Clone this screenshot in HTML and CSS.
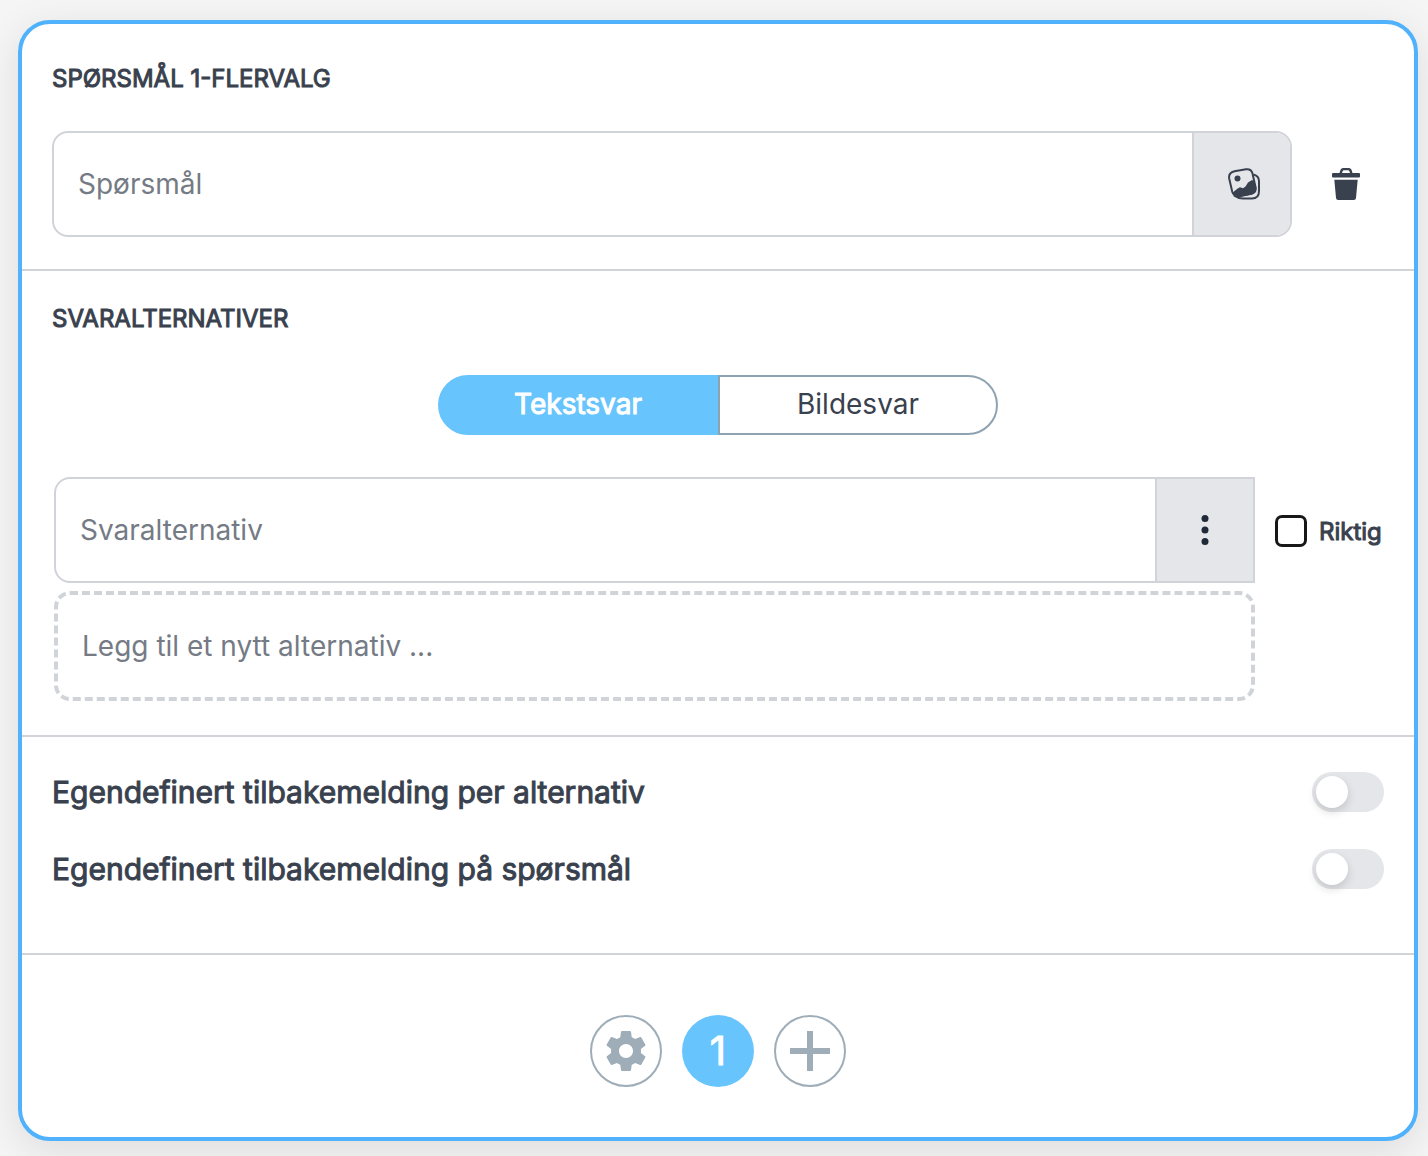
FILE: index.html
```html
<!DOCTYPE html>
<html lang="nb">
<head>
  <meta charset="UTF-8" />
  <meta name="viewport" content="width=device-width, initial-scale=1.0"/>
  <title>Flervalg</title>
  <link rel="stylesheet" href="styles.css">
</head>
<body>
  <form class="card">
    <section class="section question">
      <h2><label for="question">SPØRSMÅL 1-FLERVALG</label></h2>
      <div class="question-row">
        <div class="field">
          <input type="text" id="question" placeholder="Spørsmål">
          <button type="button" class="addon" aria-label="Legg til bilde">
            <svg width="36" height="32" viewBox="-4 0 36 32" fill="none" stroke="currentColor" stroke-width="2">
              <path d="M25.500 6.500C29 7.500 31 9.500 31 13V23Q31 30.500 24 30.500H15Q10 30.500 6 27.500"/>
              <path d="M6.500 3.300L18 1.200Q23.500 .6 24.500 5.500L27.500 19Q28.500 24.500 23.500 25.800L12 28Q6 29 4.300 24L1.200 10.500Q.2 5 6.500 3.300Z"/>
              <circle cx="9.500" cy="10.500" r="3" fill="currentColor" stroke="none"/>
              <path d="M4 25L10 20.200L12 19.200L15 20.200L17.500 18.500L20 14.500L24 12L26.500 13.500L28.300 19Q29 25 24 26.500L12 29Q6.500 29 4 25Z" fill="currentColor" stroke="none"/>
            </svg>
          </button>
        </div>
        <button type="button" class="trash" aria-label="Slett spørsmål">
          <svg width="28" height="32" viewBox="0 0 28 32" fill="currentColor">
            <path fill-rule="evenodd" d="M7.500 5L8.500 1.800Q9.200 0 11.200 0H16.800Q18.800 0 19.500 1.800L20.500 5H27Q28 5 28 6V8.500Q28 9.500 27 9.500H1Q0 9.500 0 8.500V6Q0 5 1 5ZM10 5H18L17.300 3Q17 2.300 16.300 2.300H11.700Q11 2.300 10.700 3Z"/>
            <path d="M2.300 11.800H25.700L24 30Q23.800 32 21.800 32H6.200Q4.200 32 4 30Z"/>
          </svg>
        </button>
      </div>
    </section>

    <section class="section answers">
      <h2>SVARALTERNATIVER</h2>
      <div class="segments">
        <button type="button" class="active">Tekstsvar</button>
        <button type="button">Bildesvar</button>
      </div>
      <div class="answer-list">
        <div class="field square">
          <input type="text" placeholder="Svaralternativ" aria-label="Svaralternativ">
          <button type="button" class="addon dots" aria-label="Flere valg">
            <svg width="8" height="32" viewBox="0 0 8 32" fill="currentColor">
              <circle cx="4" cy="4.500" r="3.500"/>
              <circle cx="4" cy="16" r="3.500"/>
              <circle cx="4" cy="27.500" r="3.500"/>
            </svg>
          </button>
        </div>
        <label class="correct"><input type="checkbox">Riktig</label>
        <input type="text" class="new-answer" placeholder="Legg til et nytt alternativ ..." aria-label="Nytt alternativ">
      </div>
    </section>

    <section class="section feedback">
      <label class="toggle-row">Egendefinert tilbakemelding per alternativ<input type="checkbox" class="toggle"></label>
      <label class="toggle-row">Egendefinert tilbakemelding på spørsmål<input type="checkbox" class="toggle"></label>
    </section>

    <nav class="pager">
      <button type="button" aria-label="Innstillinger">
        <svg width="48" height="48" viewBox="0 0 24 24" fill="currentColor">
          <path d="M19.430 12.980c.04-.32.070-.64.070-.98s-.03-.66-.07-.98l2.110-1.650c.19-.15.240-.42.120-.64l-2-3.460c-.12-.22-.39-.3-.61-.22l-2.490 1c-.52-.4-1.080-.73-1.690-.98l-.38-2.650C14.460 2.180 14.250 2 14 2h-4c-.25 0-.46.180-.49.420l-.38 2.650c-.61.250-1.170.590-1.690.980l-2.490-1c-.23-.09-.49 0-.61.220l-2 3.460c-.13.220-.07.490.12.640l2.110 1.650c-.04.320-.07.650-.07.980s.03.660.07.980l-2.110 1.650c-.19.150-.24.420-.12.640l2 3.460c.12.220.39.300.61.220l2.490-1c.52.400 1.080.730 1.690.980l.38 2.650c.03.240.24.420.49.420h4c.25 0 .46-.18.490-.42l.38-2.650c.61-.25 1.170-.59 1.690-.98l2.490 1c.23.090.49 0 .61-.22l2-3.460c.12-.22.070-.49-.12-.64l-2.110-1.650zM12 15.500c-1.930 0-3.500-1.570-3.500-3.500s1.570-3.500 3.500-3.500 3.500 1.570 3.500 3.500-1.570 3.500-3.500 3.500z"/>
        </svg>
      </button>
      <button type="button" class="current">1</button>
      <button type="button" aria-label="Nytt spørsmål">
        <svg width="40" height="40" viewBox="0 0 40 40" stroke="currentColor" stroke-width="6">
          <path d="M20 0V40M0 20H40"/>
        </svg>
      </button>
    </nav>
  </form>
</body>
</html>
```
FILE: styles.css
```css
* {
  box-sizing: border-box;
}

body {
  margin: 0;
  padding: 20px 10px 15px 18px;
  background: #f5f5f5;
  color: #39414e;
  font-family: Inter, sans-serif;
  font-size: 28px;
}

button,
input {
  margin: 0;
  padding: 0;
  border: 0;
  background: none;
  color: inherit;
  font: inherit;
}

button {
  display: flex;
  align-items: center;
  justify-content: center;
  cursor: pointer;
}

.card {
  background: white;
  border: 4px solid #50b2fc;
  border-radius: 32px;
  box-shadow: 0 10px 40px rgba(0,0,0,0.1);
}

.section {
  padding: 39px 30px 32px;
  border-bottom: 2px solid #d0d3d8;
}

h2 {
  margin: 0;
  font-size: 24px;
  font-weight: 400;
  line-height: 32px;
  -webkit-text-stroke: 1px;
}

.question-row {
  display: flex;
  margin-top: 36px;
}

.field {
  display: flex;
  flex: 1;
  height: 106px;
  border: 2px solid #d0d3d8;
  border-radius: 16px;
  overflow: hidden;
}

.field.square {
  border-radius: 16px 0 0 16px;
}

.field input {
  flex: 1;
  min-width: 0;
  padding: 0 24px;
}

::placeholder {
  color: #757b85;
  opacity: 1;
}

.addon {
  width: 98px;
  background: #e5e6ea;
  border-left: 2px solid #d0d3d8;
}

.dots {
  color: #1f2937;
}

.trash {
  width: 76px;
  margin-left: 16px;
}

.answers {
  padding: 32px 30px 34px;
}

.segments {
  display: flex;
  width: 560px;
  height: 60px;
  margin: 40px auto 42px;
}

.segments button {
  width: 50%;
  padding-bottom: 2px;
  border: 2px solid #8ea3b1;
  border-radius: 0 30px 30px 0;
}

.segments .active {
  border-color: #67c4fd;
  border-radius: 30px 0 0 30px;
  background: #67c4fd;
  color: white;
  -webkit-text-stroke: 1px;
}

.answer-list {
  display: grid;
  grid-template-columns: 1fr 109px;
  gap: 8px 20px;
  padding-left: 2px;
}

.correct {
  display: flex;
  align-items: center;
  gap: 12px;
  padding-top: 2px;
  font-size: 24px;
  -webkit-text-stroke: 1px;
}

.correct input {
  appearance: none;
  width: 32px;
  height: 32px;
  border: 3px solid #171717;
  border-radius: 7px;
}

.correct input:checked {
  background: #67c4fd;
}

.new-answer {
  height: 110px;
  padding: 0 24px;
  border: 4px dashed #d0d3d8;
  border-radius: 16px;
}

.feedback {
  display: flex;
  flex-direction: column;
  gap: 37px;
  padding: 35px 30px 64px;
}

.toggle-row {
  display: flex;
  align-items: center;
  justify-content: space-between;
  font-size: 30px;
  line-height: 38px;
  -webkit-text-stroke: 1px;
}

.toggle {
  appearance: none;
  width: 72px;
  height: 40px;
  padding: 4px;
  border-radius: 20px;
  background: #e5e6ea;
}

.toggle::before {
  content: "";
  display: block;
  width: 32px;
  height: 32px;
  border-radius: 50%;
  background: white;
  box-shadow: 0 4px 10px rgba(0,0,0,0.15);
}

.toggle:checked {
  background: #67c4fd;
}

.toggle:checked::before {
  margin-left: 32px;
}

.pager {
  display: flex;
  justify-content: center;
  gap: 20px;
  padding: 60px 30px 50px;
}

.pager button {
  width: 72px;
  height: 72px;
  border: 2px solid #9eadb8;
  border-radius: 50%;
  color: #9eadb8;
}

.pager .current {
  padding-bottom: 2px;
  border: 0;
  background: #67c4fd;
  color: white;
  font-size: 40px;
  -webkit-text-stroke: 1px;
}
```
